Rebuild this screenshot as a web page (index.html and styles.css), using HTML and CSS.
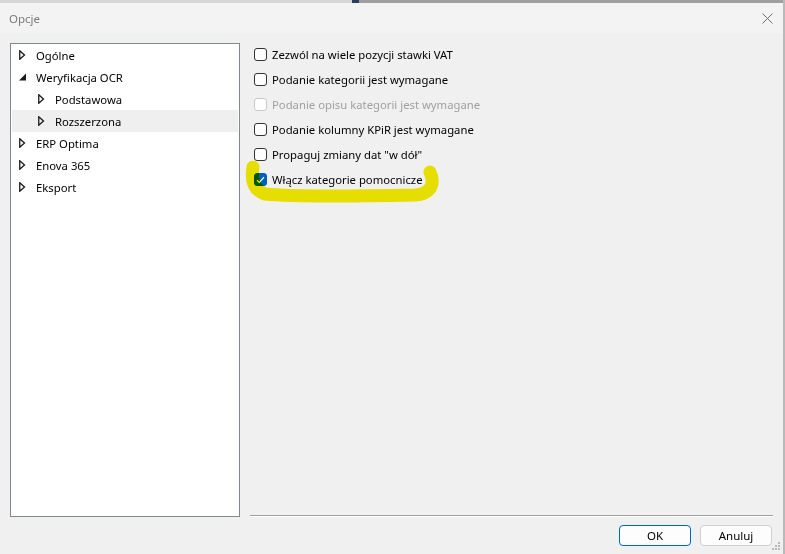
FILE: index.html
```html
<!DOCTYPE html>
<html lang="pl">
<head>
<meta charset="utf-8">
<title>Opcje</title>
<link rel="stylesheet" href="styles.css">
</head>
<body>
<div class="window">
  <div class="topstrip"><span class="strip-a"></span><span class="strip-b"></span><span class="strip-c"></span></div>
  <div class="titlebar">
    <span class="title">Opcje</span>
    <svg class="close" width="11" height="11" viewBox="0 0 11 11"><path d="M0.5 0.5 L10.5 10.5 M10.5 0.5 L0.5 10.5" stroke="#6f6f6f" stroke-width="1" fill="none"/></svg>
  </div>
  <div class="content">
    <div class="tree">
      <div class="node">
        <svg class="arrow" width="7" height="10" viewBox="0 0 7 10"><path d="M0.75 0.75 L5.5 5 L0.75 9.25 Z" fill="none" stroke="#1a1a1a" stroke-width="1.3"/></svg>
        <span>Ogólne</span>
      </div>
      <div class="node">
        <svg class="arrow" width="7" height="10" viewBox="0 0 7 10"><path d="M7 1.5 L7 8.5 L0 8.5 Z" fill="#1a1a1a"/></svg>
        <span>Weryfikacja OCR</span>
      </div>
      <div class="node child">
        <svg class="arrow" width="7" height="10" viewBox="0 0 7 10"><path d="M0.75 0.75 L5.5 5 L0.75 9.25 Z" fill="none" stroke="#1a1a1a" stroke-width="1.3"/></svg>
        <span>Podstawowa</span>
      </div>
      <div class="node child selected">
        <svg class="arrow" width="7" height="10" viewBox="0 0 7 10"><path d="M0.75 0.75 L5.5 5 L0.75 9.25 Z" fill="none" stroke="#1a1a1a" stroke-width="1.3"/></svg>
        <span>Rozszerzona</span>
      </div>
      <div class="node">
        <svg class="arrow" width="7" height="10" viewBox="0 0 7 10"><path d="M0.75 0.75 L5.5 5 L0.75 9.25 Z" fill="none" stroke="#1a1a1a" stroke-width="1.3"/></svg>
        <span>ERP Optima</span>
      </div>
      <div class="node">
        <svg class="arrow" width="7" height="10" viewBox="0 0 7 10"><path d="M0.75 0.75 L5.5 5 L0.75 9.25 Z" fill="none" stroke="#1a1a1a" stroke-width="1.3"/></svg>
        <span>Enova 365</span>
      </div>
      <div class="node">
        <svg class="arrow" width="7" height="10" viewBox="0 0 7 10"><path d="M0.75 0.75 L5.5 5 L0.75 9.25 Z" fill="none" stroke="#1a1a1a" stroke-width="1.3"/></svg>
        <span>Eksport</span>
      </div>
    </div>
    <div class="panel">
      <div class="options">
        <div class="opt"><span class="box"></span><span>Zezwól na wiele pozycji stawki VAT</span></div>
        <div class="opt"><span class="box"></span><span>Podanie kategorii jest wymagane</span></div>
        <div class="opt disabled"><span class="box"></span><span>Podanie opisu kategorii jest wymagane</span></div>
        <div class="opt"><span class="box"></span><span>Podanie kolumny KPiR jest wymagane</span></div>
        <div class="opt"><span class="box"></span><span>Propaguj zmiany dat "w dół"</span></div>
        <div class="opt checked"><span class="box"><svg width="9" height="8" viewBox="0 0 9 8"><path d="M1 4.2 L3.4 6.5 L8 1.2" fill="none" stroke="#ffffff" stroke-width="1.2"/></svg></span><span>Włącz kategorie pomocnicze</span></div>
      </div>
      <div class="separator"></div>
    </div>
  </div>
  <div class="buttons">
    <button class="btn default">OK</button>
    <button class="btn">Anuluj</button>
  </div>
  <svg class="grip" width="9" height="9" viewBox="0 0 9 9">
    <rect x="6" y="0" width="2" height="2" fill="#b8b8b8"/>
    <rect x="3" y="3" width="2" height="2" fill="#b8b8b8"/>
    <rect x="6" y="3" width="2" height="2" fill="#b8b8b8"/>
    <rect x="0" y="6" width="2" height="2" fill="#b8b8b8"/>
    <rect x="3" y="6" width="2" height="2" fill="#b8b8b8"/>
    <rect x="6" y="6" width="2" height="2" fill="#b8b8b8"/>
  </svg>
  <svg class="marker" width="200" height="50" viewBox="0 0 200 50">
    <path d="M8 6 C6 18 8 29 20 33 C50 36 120 35 170 34 C184 33 191 25 185 11" fill="none" stroke="#f4ec00" stroke-width="13" stroke-linecap="round" stroke-linejoin="round"/>
  </svg>
</div>
</body>
</html>
```
FILE: styles.css
```css
html, body {
  margin: 0;
  padding: 0;
}
body {
  width: 785px;
  height: 554px;
  overflow: hidden;
  background: #f0f0f0;
  font-family: "Noto Sans", "Open Sans", sans-serif;
  font-size: 11.3px;
  color: #000;
}
.window {
  position: relative;
  width: 785px;
  height: 554px;
  box-sizing: border-box;
  border-right: 2px solid #b9b9b9;
  display: flex;
  flex-direction: column;
}
.topstrip {
  display: flex;
  height: 3px;
}
.strip-a {
  width: 352px;
  background: #d6d6d6;
}
.strip-b {
  width: 7px;
  background: #28405e;
}
.strip-c {
  flex: 1;
  background: #9f9f9f;
}
.titlebar {
  height: 30px;
  background: #f3f3f3;
  display: flex;
  align-items: center;
  justify-content: space-between;
  padding: 0 9px 0 9px;
}
.title {
  color: #7c7c7c;
  font-size: 11.5px;
  padding-top: 1px;
}
.close {
  margin-right: 1px;
}
.content {
  display: flex;
  padding: 10px 10px 0 10px;
  height: 474px;
}
.tree {
  height: 472px;
  border: 1px solid #828790;
  background: #fff;
  padding: 0 1px;
  width: 226px;
}
.node {
  height: 22px;
  display: flex;
  align-items: center;
  padding-left: 7px;
}
.node .arrow {
  width: 7px;
  height: 10px;
  margin-right: 10px;
}
.node.child {
  padding-left: 26px;
}
.node.selected {
  background: #efefef;
}
.panel {
  flex: 1;
  margin-left: 10px;
  display: flex;
  flex-direction: column;
}
.options {
  flex: 1;
  padding-top: 0;
  margin-top: -1px;
}
.opt {
  height: 25px;
  display: flex;
  align-items: center;
  padding-left: 4px;
}
.opt .box {
  width: 13px;
  height: 13px;
  box-sizing: border-box;
  border: 1px solid #333;
  border-radius: 3px;
  background: #fff;
  margin-right: 5px;
  display: flex;
  align-items: center;
  justify-content: center;
}
.opt.disabled {
  color: #a0a0a0;
}
.opt.disabled .box {
  border-color: #c8c8c8;
}
.opt.checked .box {
  background: #005fb8;
  border-color: #005fb8;
}
.separator {
  height: 1px;
  background: #a0a0a0;
  border-bottom: 1px solid #fff;
}
.buttons {
  display: flex;
  justify-content: flex-end;
  gap: 9px;
  padding: 8px 11px 0 0;
}
.btn {
  width: 72px;
  height: 21px;
  box-sizing: border-box;
  border: 1px solid #d0d0d0;
  border-radius: 4px;
  background: #fdfdfd;
  font-family: "Noto Sans", "Open Sans", sans-serif;
  font-size: 11.5px;
  color: #000;
  padding: 0;
}
.btn.default {
  border-color: #0067c0;
}
.grip {
  position: absolute;
  right: 2px;
  bottom: 3px;
}
.marker {
  position: absolute;
  left: 245px;
  top: 161px;
  mix-blend-mode: multiply;
}
```
